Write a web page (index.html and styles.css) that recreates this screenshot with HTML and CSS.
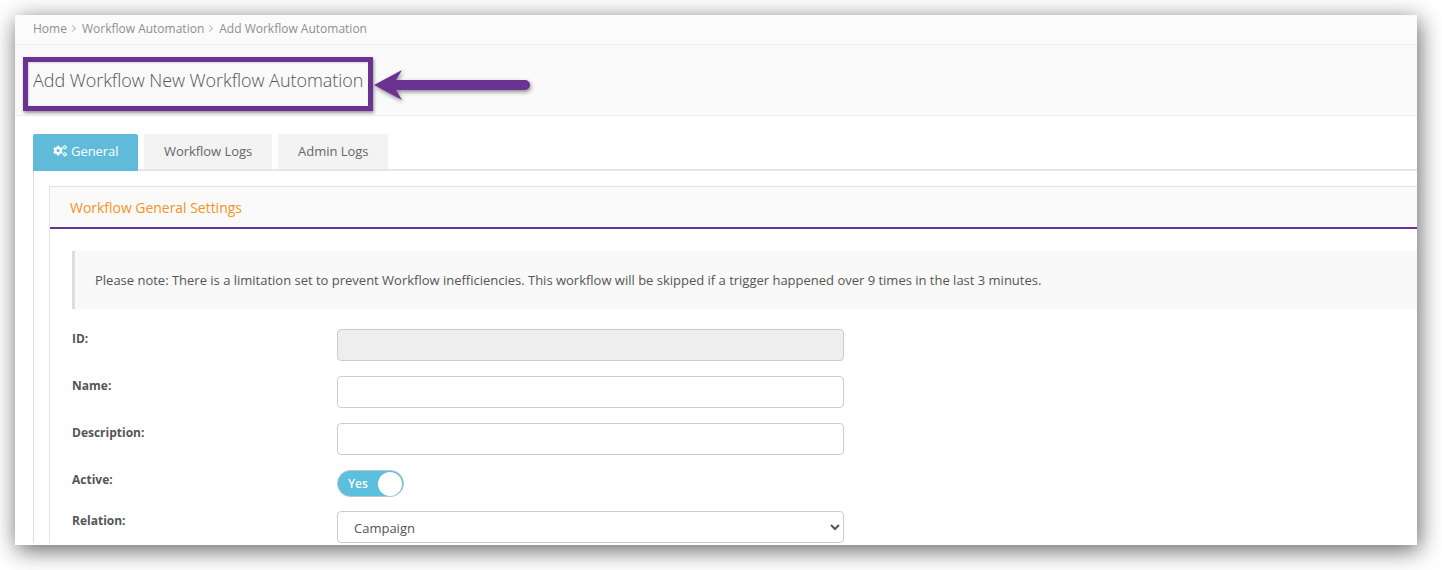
FILE: index.html
```html
<!DOCTYPE html>
<html lang="en">
<head>
<meta charset="utf-8">
<title>Add Workflow Automation</title>
<link rel="stylesheet" href="styles.css">
</head>
<body>
<div class="window">
  <nav class="breadcrumb">
    <span>Home</span><span class="sep"></span>
    <span>Workflow Automation</span><span class="sep"></span>
    <span>Add Workflow Automation</span>
  </nav>
  <header class="page-head">
    <h1>Add Workflow New Workflow Automation</h1>
  </header>
  <main class="content">
    <div class="tabs">
      <div class="tab active">
        <svg class="cogs" viewBox="0 0 14 12" width="14" height="12" aria-hidden="true">
          <path fill="#fff" fill-rule="evenodd" d="M4 .8h2.200l.3 1.400 1 .5 1.300-.6 1.100 1.900-1 1v1.200l1 1-1.100 1.900-1.300-.6-1 .5-.3 1.400H4l-.3-1.400-1-.5-1.300.6L.3 7.200l1-1V5l-1-1 1.100-1.900 1.300.6 1-.5zM5.100 4a1.600 1.600 0 1 0 0 3.200 1.600 1.600 0 0 0 0-3.200z"/>
          <circle cx="11.800" cy="2.300" r="1.400" fill="none" stroke="#fff" stroke-width="1.500" stroke-dasharray="1.400 .4"/>
          <circle cx="11.800" cy="9.400" r="1.400" fill="none" stroke="#fff" stroke-width="1.500" stroke-dasharray="1.400 .4"/>
        </svg>
        General
      </div>
      <div class="tab">Workflow Logs</div>
      <div class="tab">Admin Logs</div>
    </div>
    <div class="tab-body">
      <section class="panel">
        <h2 class="panel-title">Workflow General Settings</h2>
        <div class="panel-body">
          <p class="note">Please note: There is a limitation set to prevent Workflow inefficiencies. This workflow will be skipped if a trigger happened over 9 times in the last 3 minutes.</p>
          <div class="row">
            <label class="label">ID:</label>
            <input class="field disabled" type="text" disabled>
          </div>
          <div class="row">
            <label class="label">Name:</label>
            <input class="field" type="text">
          </div>
          <div class="row">
            <label class="label">Description:</label>
            <input class="field" type="text">
          </div>
          <div class="row row-toggle">
            <label class="label">Active:</label>
            <div class="toggle"><span>Yes</span><i class="knob"></i></div>
          </div>
          <div class="row">
            <label class="label">Relation:</label>
            <select class="field select"><option>Campaign</option></select>
          </div>
        </div>
      </section>
    </div>
  </main>
  <div class="callout"></div>
  <svg class="arrow" viewBox="0 0 170 30" width="170" height="30" aria-hidden="true">
    <path fill="#6a3291" d="M0 15 L28 0 L22 10 H151 a5 5 0 0 1 0 10 H22 L28 30 Z"/>
  </svg>
</div>
</body>
</html>
```
FILE: styles.css
```css
* { box-sizing: border-box; }
html, body { height: 100%; }
body {
  margin: 0;
  padding: 15px 25px 25px 15px;
  background: #fff;
  overflow: hidden;
  font-family: "Open Sans", "Liberation Sans", sans-serif;
  font-size: 13px;
  color: #555;
}
.window {
  position: relative;
  width: 1402px;
  height: 530px;
  background: #fff;
  overflow: hidden;
  box-shadow: 2px 5px 22px rgba(0, 0, 0, .62);
}
.breadcrumb {
  height: 30px;
  padding: 0 18px 2px;
  display: flex;
  align-items: center;
  font-size: 12px;
  color: #8f8f8f;
  background: #fbfbfb;
  border-bottom: 1px solid #eee;
}
.sep {
  width: 5px;
  height: 5px;
  margin: 0 7px 0 3px;
  border-top: 1px solid #bbb;
  border-right: 1px solid #bbb;
  transform: rotate(45deg);
}
.page-head {
  height: 71px;
  padding: 0 18px;
  display: flex;
  align-items: center;
  background: #fafafa;
  border-bottom: 1px solid #eee;
}
h1 {
  margin: 0;
  font-size: 18px;
  font-weight: 300;
  letter-spacing: -.055px;
  color: #555;
}
.content { padding: 18px 0 0 18px; width: 1500px; }
.tabs { display: flex; gap: 6px; align-items: flex-start; height: 37px; position: relative; z-index: 1; }
.tab {
  height: 35px;
  padding: 0 20px 2px;
  display: flex;
  align-items: center;
  letter-spacing: -.05px;
  background: #f3f3f3;
  color: #666;
  border-radius: 2px 2px 0 0;
}
.tab.active {
  width: 105px;
  height: 37px;
  padding-right: 0;
  padding-bottom: 4px;
  background: #5fbbd9;
  color: #fff;
  gap: 4px;
}
.cogs { flex: none; }
.tab-body {
  border-left: 1px solid #ddd;
  border-top: 2px solid #e6e6e6;
  margin-top: -2px;
  padding: 15px 0 0 15px;
}
.panel { border: 1px solid #e3e3e3; border-right: 0; border-bottom: 0; }
.panel-title {
  margin: 0;
  height: 42px;
  padding: 0 20px;
  display: flex;
  align-items: center;
  font-size: 14px;
  font-weight: 400;
  letter-spacing: -.03px;
  color: #f7931e;
  background: #fafafa;
  border-bottom: 2px solid #6a3291;
}
.panel-body { padding: 22px 0 0 22px; }
.note {
  margin: 0 0 20px;
  height: 58px;
  padding: 0 20px;
  display: flex;
  align-items: center;
  letter-spacing: -.006px;
  background: #f9f9f9;
  border-left: 3px solid #ddd;
}
.row { display: flex; height: 32px; margin-bottom: 15px; }
.row-toggle { height: 27px; margin-bottom: 14px; }
.label {
  width: 265px;
  flex: none;
  padding-top: 1px;
  font-size: 12px;
  font-weight: 700;
  line-height: 18px;
  color: #555;
}
.field {
  width: 507px;
  height: 32px;
  padding: 0 12px;
  font: inherit;
  color: #555;
  background: #fff;
  border: 1px solid #ccc;
  border-radius: 4px;
}
.disabled { background: #eee; }
.select { padding: 2px 12px 0; }
.toggle {
  width: 67px;
  height: 27px;
  display: flex;
  align-items: center;
  justify-content: space-between;
  padding: 0 1px 0 10px;
  color: #fff;
  font-size: 12px;
  font-weight: 600;
  background: #5bc0de;
  border: 1px solid #b8c4c8;
  border-radius: 14px;
}
.knob {
  width: 24px;
  height: 24px;
  background: #fff;
  border-radius: 50%;
}
.callout {
  position: absolute;
  left: 8px;
  top: 42px;
  width: 350px;
  height: 54px;
  border: 5px solid #6a3291;
  box-shadow: 1px 2px 3px rgba(0, 0, 0, .4), inset 1px 1px 2px rgba(0, 0, 0, .15);
}
.arrow {
  position: absolute;
  left: 359px;
  top: 54.5px;
  overflow: visible;
  filter: drop-shadow(1px 2px 2px rgba(0, 0, 0, .45));
}
```
